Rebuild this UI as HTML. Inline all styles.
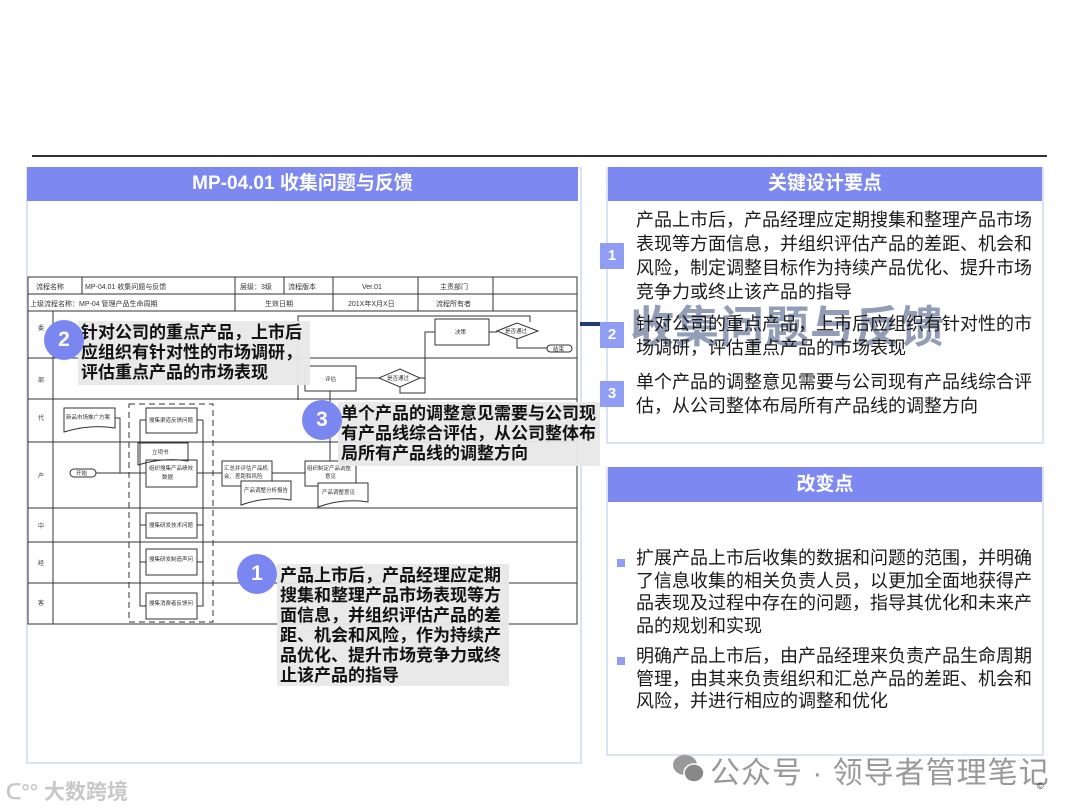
<!DOCTYPE html>
<html><head><meta charset="utf-8"><style>
body{margin:0;width:1080px;height:810px;background:#fff;position:relative;overflow:hidden;font-family:"Liberation Sans","Noto Sans CJK SC",sans-serif;}
.abs{position:absolute}
.hdr{position:absolute;background:#7d89f0;color:#fff;font-weight:bold;font-size:19px;text-align:center;}
.box{position:absolute;border:2px solid #dde1f7;}
.txt{position:absolute;font-size:18px;line-height:24px;color:#1a1a1a;}
.badge{position:absolute;width:24px;height:26px;background:#8f9df2;color:#fff;font-weight:bold;font-size:15px;text-align:center;line-height:26px;}
.call{position:absolute;background:rgba(232,232,232,0.95);font-weight:bold;font-size:17px;line-height:20px;color:#111;padding:2px 3px;}
.circ{position:absolute;width:40px;height:40px;border-radius:50%;background:#7b87f0;color:#fff;font-weight:bold;font-size:21px;text-align:center;line-height:40px;}
.sq{position:absolute;width:8px;height:8px;background:#8f9df2;}
</style></head><body>
<div class="abs" style="left:32px;top:155px;width:1015px;height:2px;background:#333"></div>

<div class="box" style="left:26px;top:167px;width:552px;height:593px;"></div>
<div class="hdr" style="left:27px;top:167px;width:551px;height:34px;line-height:34px;">MP-04.01 收集问题与反馈</div>

<svg class="abs" style="left:0;top:0" width="600" height="640" font-family="Liberation Sans,Noto Sans CJK SC,sans-serif" font-size="6" fill="none" stroke="#333" stroke-width="1">
<rect x="28" y="277" width="549" height="347"/>
<line x1="28" y1="294" x2="577" y2="294"/><line x1="28" y1="311" x2="577" y2="311"/>
<line x1="28" y1="358" x2="577" y2="358"/><line x1="28" y1="399" x2="577" y2="399"/><line x1="28" y1="442" x2="577" y2="442"/><line x1="28" y1="508" x2="577" y2="508"/><line x1="28" y1="542" x2="577" y2="542"/><line x1="28" y1="583" x2="577" y2="583"/>
<line x1="53" y1="311" x2="53" y2="624"/>
<line x1="82" y1="277" x2="82" y2="294"/><line x1="235" y1="277" x2="235" y2="311"/><line x1="284" y1="277" x2="284" y2="294"/><line x1="333" y1="277" x2="333" y2="311"/><line x1="418" y1="277" x2="418" y2="311"/><line x1="493" y1="277" x2="493" y2="311"/>
<g fill="#333" stroke="none" font-size="7">
<text x="36" y="289">流程名称</text><text x="85" y="289">MP-04.01 收集问题与反馈</text><text x="240" y="289">层级：3级</text><text x="288" y="289">流程版本</text><text x="362" y="289">Ver.01</text><text x="440" y="289">主责部门</text>
<text x="30" y="306">上级流程名称：MP-04 管理产品生命周期</text><text x="265" y="306">生效日期</text><text x="348" y="306">201X年X月X日</text><text x="436" y="306">流程所有者</text>
<g font-size="6"><text x="38" y="330">委</text><text x="38" y="382">部</text><text x="38" y="420">代</text><text x="38" y="478">产</text><text x="38" y="528">中</text><text x="38" y="565">经</text><text x="38" y="605">客</text></g>
</g>
<polyline points="298,400 298,316 530,316 530,322"/>
<rect x="435" y="319" width="54" height="26"/>
<polygon points="497,331 517,323 538,331 517,339"/>
<polyline points="517,339 517,348 547,348"/>
<rect x="547" y="345" width="25" height="7" rx="3.5"/>
<rect x="305" y="366" width="51" height="25"/>
<polygon points="379,378 400,369 420,378 400,387"/>
<line x1="356" y1="378" x2="379" y2="378"/>
<polyline points="420,378 425,378 425,332 435,332"/><polyline points="400,387 400,393 425,393 425,378"/>
<line x1="489" y1="332" x2="497" y2="332"/>
<path d="M64,408 H115 V428 Q90,424 64,432 Z"/>
<rect x="129" y="404" width="84" height="218" stroke-dasharray="6,4"/>
<rect x="146" y="408" width="51" height="25"/>
<path d="M138,443 H188 V461 Q163,457 138,465 Z"/>
<rect x="146" y="460" width="51" height="27"/>
<rect x="146" y="513" width="51" height="25"/>
<rect x="146" y="549" width="51" height="26"/>
<rect x="146" y="593" width="51" height="26"/>
<polyline points="140,420 140,606 146,606"/><polyline points="203,420 203,606 197,606"/>
<line x1="140" y1="525" x2="146" y2="525"/><line x1="140" y1="562" x2="146" y2="562"/><line x1="197" y1="525" x2="203" y2="525"/><line x1="197" y1="562" x2="203" y2="562"/>
<line x1="140" y1="420" x2="146" y2="420"/><line x1="197" y1="420" x2="203" y2="420"/>
<polyline points="115,418 120,418 120,473"/>
<rect x="70" y="469" width="26" height="8" rx="4"/>
<line x1="96" y1="473" x2="146" y2="473"/><line x1="197" y1="473" x2="222" y2="473"/>
<rect x="222" y="461" width="50" height="25"/>
<path d="M241,481 H291 V500 Q266,496 241,505 Z" fill="#fff"/>
<polyline points="272,473 298,473 305,473"/>
<rect x="305" y="461" width="51" height="25"/>
<path d="M318,483 H368 V502 Q343,498 318,507 Z" fill="#fff"/>
<line x1="330" y1="391" x2="330" y2="461"/>
<g fill="#333" stroke="none" font-size="5.5">
<text x="455" y="334">决策</text><text x="505" y="333">是否通过</text><text x="553" y="351">结束</text>
<text x="325" y="381">评估</text><text x="387" y="380">是否通过</text>
<text x="66" y="419">新品市场推广方案</text><text x="149" y="422">搜集渠道反馈问题</text><text x="152" y="454">立项书</text>
<text x="149" y="470">组织搜集产品绩效</text><text x="162" y="479">数据</text><text x="76" y="475">开始</text>
<text x="224" y="470">汇总并评估产品机</text><text x="224" y="478">会、差距和风险</text><text x="244" y="492">产品调整分析报告</text>
<text x="307" y="470">组织制定产品调整</text><text x="325" y="478">意见</text><text x="322" y="494">产品调整意见</text>
<text x="149" y="527">搜集研发技术问题</text><text x="149" y="561">搜集研发制造声问</text><text x="149" y="605">搜集消费者反馈问</text>
</g>
</svg>

<div class="call" style="left:78px;top:321px;width:226px;">针对公司的重点产品，上市后应组织有针对性的市场调研，评估重点产品的市场表现</div>
<div class="circ" style="left:44px;top:320px;">2</div>
<div class="call" style="left:338px;top:402px;width:256px;">单个产品的调整意见需要与公司现有产品线综合评估，从公司整体布局所有产品线的调整方向</div>
<div class="circ" style="left:302px;top:400px;">3</div>
<div class="call" style="left:277px;top:564px;width:226px;height:118px;">产品上市后，产品经理应定期搜集和整理产品市场表现等方面信息，并组织评估产品的差距、机会和风险，作为持续产品优化、提升市场竞争力或终止该产品的指导</div>
<div class="circ" style="left:237px;top:554px;">1</div>

<div class="box" style="left:606px;top:167px;width:434px;height:273px;"></div>
<div class="hdr" style="left:608px;top:167px;width:434px;height:34px;line-height:34px;">关键设计要点</div>
<div class="txt" style="left:636px;top:208px;width:405px;">产品上市后，产品经理应定期搜集和整理产品市场<br>表现等方面信息，并组织评估产品的差距、机会和<br>风险，制定调整目标作为持续产品优化、提升市场<br>竞争力或终止该产品的指导</div>
<div class="badge" style="left:600px;top:243px;">1</div>
<div class="abs" style="left:630px;top:291px;font-size:44px;font-weight:bold;color:rgba(110,125,160,0.75);letter-spacing:1px;white-space:nowrap;">收集问题与反馈</div>
<div class="abs" style="left:580px;top:322px;width:20px;height:4px;background:#1f3a7a"></div>
<div class="txt" style="left:636px;top:312px;width:405px;">针对公司的重点产品，上市后应组织有针对性的市<br>场调研，评估重点产品的市场表现</div>
<div class="badge" style="left:600px;top:322px;">2</div>
<div class="txt" style="left:636px;top:370px;width:405px;">单个产品的调整意见需要与公司现有产品线综合评<br>估，从公司整体布局所有产品线的调整方向</div>
<div class="badge" style="left:600px;top:381px;">3</div>

<div class="box" style="left:606px;top:467px;width:434px;height:285px;"></div>
<div class="hdr" style="left:608px;top:467px;width:434px;height:35px;line-height:35px;">改变点</div>
<div class="sq" style="left:617px;top:559px;"></div>
<div class="txt" style="left:636px;top:547px;line-height:22.5px;">扩展产品上市后收集的数据和问题的范围，并明确<br>了信息收集的相关负责人员，以更加全面地获得产<br>品表现及过程中存在的问题，指导其优化和未来产<br>品的规划和实现</div>
<div class="sq" style="left:617px;top:657px;"></div>
<div class="txt" style="left:636px;top:645px;line-height:22.5px;">明确产品上市后，由产品经理来负责产品生命周期<br>管理，由其来负责组织和汇总产品的差距、机会和<br>风险，并进行相应的调整和优化</div>

<svg class="abs" style="left:672px;top:752px" width="34" height="32"><ellipse cx="13" cy="13" rx="12" ry="10" fill="#9a9a9a"/><ellipse cx="22" cy="21" rx="10" ry="9" fill="#888" stroke="#fff" stroke-width="1.5"/></svg>
<div class="abs" style="left:710px;top:748px;font-size:30px;color:#999;white-space:nowrap;letter-spacing:1px;">公众号 · 领导者管理笔记</div>
<div class="abs" style="left:1037px;top:781px;font-size:9px;color:#333;">©</div>
<div class="abs" style="left:6px;top:776px;font-size:21px;color:#c8c8c8;white-space:nowrap;font-weight:bold;">ᑕ°° 大数跨境</div>
</body></html>
